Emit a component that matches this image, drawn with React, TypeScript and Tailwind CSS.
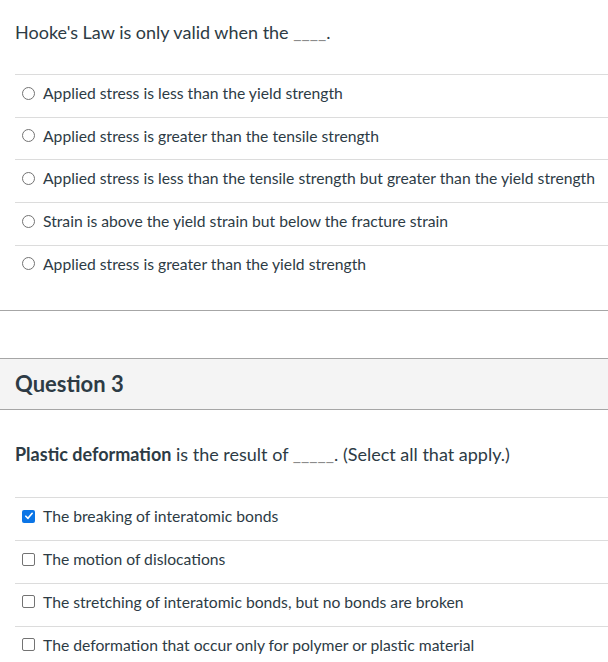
const font = { fontFamily: "Lato, 'Liberation Sans', sans-serif" }

function Radio() {
  return (
    <span className="inline-block h-[13px] w-[13px] shrink-0 rounded-full border border-[#737373] bg-white" />
  )
}

function Check({ checked }: { checked?: boolean }) {
  if (checked) {
    return (
      <span className="flex h-[13px] w-[13px] shrink-0 items-center justify-center rounded-[2px] bg-[#0b75e6]">
        <svg viewBox="0 0 12 12" className="h-[10px] w-[10px]">
          <path d="M2.2 6.3 L4.8 8.8 L9.8 2.8" fill="none" stroke="white" strokeWidth="2" strokeLinecap="round" strokeLinejoin="round" />
        </svg>
      </span>
    )
  }
  return <span className="inline-block h-[13px] w-[13px] shrink-0 rounded-[2px] border border-[#737373] bg-white" />
}

function Row({ children, label }: { children: React.ReactNode; label: string }) {
  return (
    <div className="flex h-[42.7px] items-start gap-[8px] border-t border-[#dcdcdc] pl-[7px] pt-[6px]">
      <div className="flex h-[24px] items-center">{children}</div>
      <span className="text-[15.7px] leading-[24px] text-[#2d3b45]">{label}</span>
    </div>
  )
}

const first = [
  "Applied stress is less than the yield strength",
  "Applied stress is greater than the tensile strength",
  "Applied stress is less than the tensile strength but greater than the yield strength",
  "Strain is above the yield strain but below the fracture strain",
  "Applied stress is greater than the yield strength",
]

const second = [
  { label: "The breaking of interatomic bonds", checked: true },
  { label: "The motion of dislocations", checked: false },
  { label: "The stretching of interatomic bonds, but no bonds are broken", checked: false },
  { label: "The deformation that occur only for polymer or plastic material", checked: false },
]

export default function App() {
  return (
    <div className="h-[662px] w-[608px] overflow-hidden bg-white text-[#2d3b45]" style={font}>
      <div className="pl-[15px]">
        <p className="pt-[20px] text-[18px] leading-[24px]">
          Hooke's Law is only valid when the <span className="text-[#8b8b8b]">____</span>.
        </p>
        <div className="mt-[30px]">
          {first.map((label) => (
            <Row key={label} label={label}>
              <Radio />
            </Row>
          ))}
        </div>
      </div>

      <div className="mt-[23px] h-[48px] border-t border-[#a6a6a6]" />

      <div className="flex h-[52px] items-center border-y border-[#a6a6a6] bg-[#f4f4f4] pl-[15px]">
        <h2 className="text-[22px] font-bold leading-[26px] text-[#2d3b45]">Question 3</h2>
      </div>

      <div className="pl-[15px]">
        <p className="pt-[32px] text-[18px] leading-[24px]">
          <span className="font-bold">Plastic deformation</span> is the result of{" "}
          <span className="text-[#8b8b8b]">_____</span>. (Select all that apply.)
        </p>
        <div className="mt-[31px]">
          {second.map((o) => (
            <Row key={o.label} label={o.label}>
              <Check checked={o.checked} />
            </Row>
          ))}
        </div>
      </div>
    </div>
  )
}
